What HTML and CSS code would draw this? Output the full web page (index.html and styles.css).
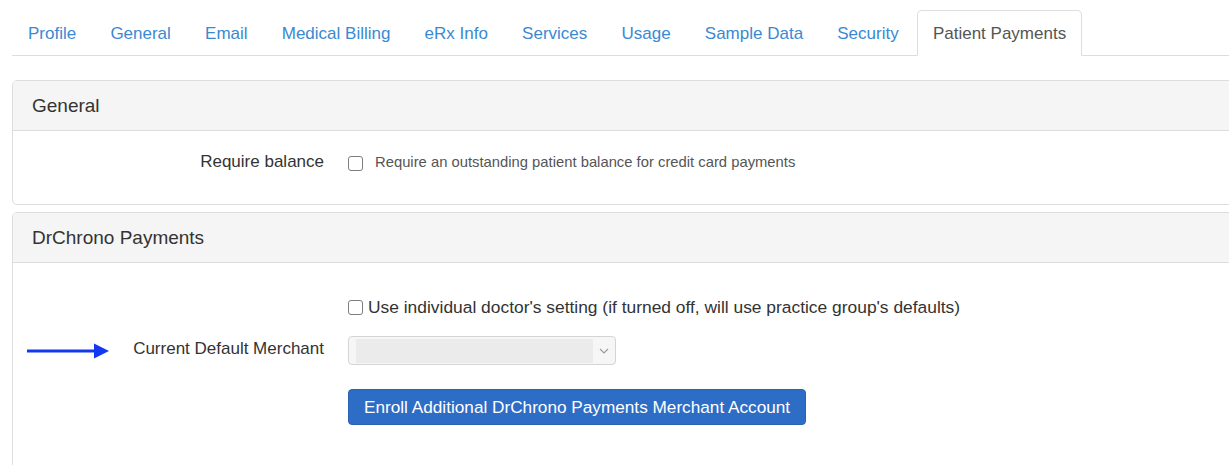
FILE: index.html
```html
<!DOCTYPE html>
<html lang="en">
<head>
<meta charset="utf-8">
<title>Practice Settings – Patient Payments</title>
<link rel="stylesheet" href="styles.css">
</head>
<body>
<div class="page">
  <ul class="tabs">
    <li class="tab"><a href="#">Profile</a></li>
    <li class="tab"><a href="#">General</a></li>
    <li class="tab"><a href="#">Email</a></li>
    <li class="tab"><a href="#">Medical Billing</a></li>
    <li class="tab"><a href="#">eRx Info</a></li>
    <li class="tab"><a href="#">Services</a></li>
    <li class="tab"><a href="#">Usage</a></li>
    <li class="tab"><a href="#">Sample Data</a></li>
    <li class="tab"><a href="#">Security</a></li>
    <li class="tab active"><a href="#">Patient Payments</a></li>
  </ul>

  <section class="panel panel-general">
    <div class="panel-heading">General</div>
    <div class="panel-body body-general">
      <div class="form-row">
        <div class="label-cell"><span class="label">Require balance</span></div>
        <label class="check small-check">
          <input type="checkbox" class="box">
          <span>Require an outstanding patient balance for credit card payments</span>
        </label>
      </div>
    </div>
  </section>

  <section class="panel panel-payments">
    <div class="panel-heading">DrChrono Payments</div>
    <div class="panel-body body-payments">
      <div class="form-row row-check">
        <div class="label-cell"></div>
        <label class="check big-check">
          <input type="checkbox" class="box">
          <span>Use individual doctor's setting (if turned off, will use practice group's defaults)</span>
        </label>
      </div>
      <div class="form-row row-select">
        <div class="label-cell">
          <svg class="pointer" width="84" height="16" viewBox="0 0 84 16" aria-hidden="true">
            <path d="M0 8 H70" stroke="#1238f0" stroke-width="3.2" fill="none"/>
            <path d="M67 0.5 L82 8 L67 15.5 Z" fill="#1238f0"/>
          </svg>
          <span class="label label-raised">Current Default Merchant</span>
        </div>
        <div class="select-box">
          <span class="select-value"></span>
          <svg class="chevron" width="10" height="6" viewBox="0 0 10 6" aria-hidden="true">
            <path d="M1 1 L5 5 L9 1" stroke="#9a9a9a" stroke-width="1.1" fill="none"/>
          </svg>
        </div>
      </div>
      <div class="form-row row-button">
        <div class="label-cell"></div>
        <div><button class="btn-primary" type="button">Enroll Additional DrChrono Payments Merchant Account</button></div>
      </div>
    </div>
  </section>
</div>
</body>
</html>
```

FILE: styles.css
```css
html, body {
  margin: 0;
  padding: 0;
  background: #fff;
  overflow: hidden;
}

body {
  font-family: "Liberation Sans", Arial, Helvetica, sans-serif;
  color: #333;
  font-size: 17px;
}

.page {
  padding: 10px 0 0 12px;
  width: 1260px;
}

/* ---- tab strip ---- */
.tabs {
  list-style: none;
  margin: 0;
  padding: 0;
  display: flex;
  border-bottom: 1px solid #ddd;
}

.tab {
  margin-right: 2.2px;
  margin-bottom: -1px;
}

.tab a {
  display: block;
  padding: 12px 15px 10px;
  line-height: 22px;
  color: #3a89d2;
  text-decoration: none;
  border: 1px solid transparent;
  border-radius: 5px 5px 0 0;
}

.tab.active a {
  color: #555;
  background: #fff;
  border-color: #ddd #ddd transparent;
}

/* ---- panels ---- */
.panel {
  border: 1px solid #ddd;
  border-radius: 5px;
  background: #fff;
}

.panel-general {
  margin-top: 24px;
}

.panel-payments {
  margin-top: 7px;
  border-bottom-left-radius: 0;
  border-bottom-right-radius: 0;
}

.panel-heading {
  background: #f5f5f5;
  border-bottom: 1px solid #ddd;
  border-radius: 4px 4px 0 0;
  padding: 12px 19px;
  line-height: 25px;
  font-size: 19px;
  color: #333;
}

.body-general {
  padding: 18px 0 29px;
}

.body-payments {
  padding: 33px 0 60px;
}

/* ---- form rows ---- */
.form-row {
  display: grid;
  grid-template-columns: 311px 1fr;
  column-gap: 24px;
  align-items: center;
}

.label-cell {
  display: flex;
  align-items: center;
  justify-content: flex-end;
  min-height: 22px;
}

.label {
  color: #333;
  line-height: 26px;
}

.label-raised {
  padding-bottom: 3px;
}

.pointer {
  margin-left: 14px;
  margin-right: auto;
  display: block;
}

.row-select {
  margin-top: 18px;
}

.row-button {
  margin-top: 24px;
}

/* ---- checkboxes ---- */
.check {
  display: flex;
  align-items: center;
}

.box {
  appearance: none;
  -webkit-appearance: none;
  margin: 0;
  width: 15px;
  height: 15px;
  border: 1px solid #7d7d7d;
  border-radius: 3px;
  background: #fff;
  flex: none;
}

.small-check {
  font-size: 14.8px;
  color: #555;
  line-height: 26px;
}

.small-check .box {
  margin-right: 12px;
  margin-top: 2px;
}

.big-check {
  font-size: 17.4px;
  color: #333;
  line-height: 22px;
}

.big-check .box {
  margin-right: 5px;
  margin-top: 1px;
}

/* ---- select ---- */
.select-box {
  width: 253px;
  height: 27px;
  border: 1px solid #d4d4d4;
  border-radius: 4px;
  background: #f6f6f6;
  display: flex;
  align-items: center;
  padding: 0 6px 0 7px;
  box-sizing: content-box;
}

.select-value {
  width: 237px;
  height: 24px;
  background: #ebebeb;
}

.chevron {
  margin-left: auto;
  margin-right: 0;
  display: block;
}

/* ---- button ---- */
.btn-primary {
  font-family: inherit;
  font-size: 17.2px;
  line-height: 22px;
  color: #fff;
  background: #2e6dc6;
  border: 1px solid #2a63b4;
  border-radius: 4px;
  padding: 6px 15px 6px;
  cursor: pointer;
}
```
